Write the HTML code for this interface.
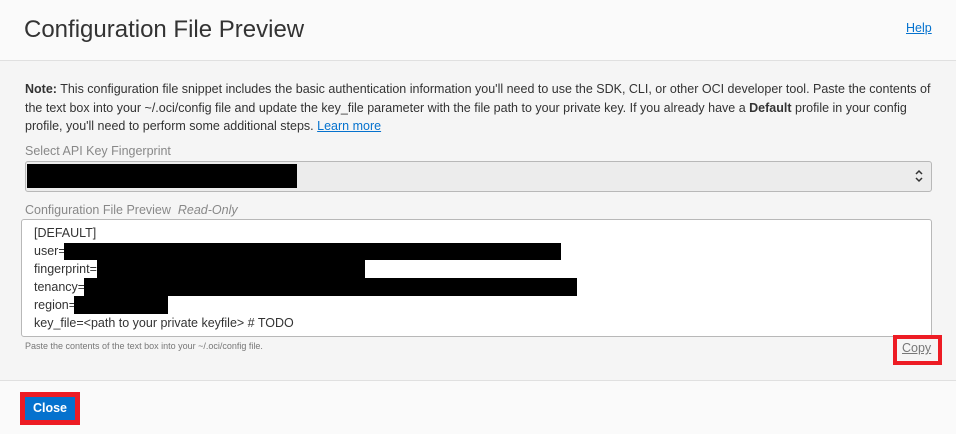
<!DOCTYPE html>
<html><head><style>
*{margin:0;padding:0;box-sizing:border-box}
body{width:956px;height:434px;position:relative;background:#f5f5f5;font-family:"Liberation Sans",Arial,sans-serif;overflow:hidden;color:#333}
.a{position:absolute}
.blk{position:absolute;background:#000}
</style></head><body>
<div class="a" style="left:0;top:0;width:956px;height:61px;background:#fafafa;border-bottom:1px solid #e0e0e0"></div>
<div class="a" style="left:24px;top:16px;font-size:24px;color:#333">Configuration File Preview</div>
<div class="a" style="left:906px;top:21px;font-size:12.5px;color:#0572ce;text-decoration:underline">Help</div>
<div class="a" style="left:25px;top:80px;width:915px;font-size:12.5px;line-height:18.5px;color:#333">
<b>Note:</b> This configuration file snippet includes the basic authentication information you'll need to use the SDK, CLI, or other OCI developer tool. Paste the contents of the text box into your ~/.oci/config file and update the key_file parameter with the file path to your private key. If you already have a <b>Default</b> profile in your config profile, you'll need to perform some additional steps. <span style="color:#0572ce;text-decoration:underline">Learn more</span></div>
<div class="a" style="left:25px;top:144px;font-size:12.5px;color:#888">Select API Key Fingerprint</div>
<div class="a" style="left:25px;top:161px;width:907px;height:31px;background:#ececec;border:1px solid #b8b8b8;border-radius:3px"></div>
<div class="blk" style="left:27px;top:164px;width:270px;height:24px"></div>
<svg class="a" style="left:914px;top:168px" width="10" height="16" viewBox="0 0 10 16"><path d="M2 6 L5 3 L8 6 M2 10 L5 13 L8 10" fill="none" stroke="#333" stroke-width="1.5"/></svg>
<div class="a" style="left:25px;top:203px;font-size:12.5px;color:#888">Configuration File Preview &nbsp;<i>Read-Only</i></div>
<div class="a" style="left:21px;top:219px;width:911px;height:118px;background:#fff;border:1px solid #b8b8b8;border-radius:3px"></div>
<div class="a" style="left:34px;top:224px;font-size:12.5px;line-height:18px;color:#333">[DEFAULT]<br>user=<br>fingerprint=<br>tenancy=<br>region=<br>key_file=&lt;path to your private keyfile&gt; # TODO</div>
<div class="blk" style="left:64px;top:243px;width:497px;height:17px"></div>
<div class="blk" style="left:97px;top:260px;width:268px;height:18px"></div>
<div class="blk" style="left:84px;top:278px;width:493px;height:18px"></div>
<div class="blk" style="left:74px;top:296px;width:94px;height:18px"></div>
<div class="a" style="left:25px;top:341px;font-size:9px;color:#777">Paste the contents of the text box into your ~/.oci/config file.</div>
<div class="a" style="left:893px;top:335px;width:49px;height:30px;border:4px solid #ed1c24;background:#f5f5f5"></div>
<div class="a" style="left:902px;top:341px;font-size:12.5px;color:#777;text-decoration:underline">Copy</div>
<div class="a" style="left:0;top:380px;width:956px;height:54px;background:#fafafa;border-top:1px solid #e0e0e0"></div>
<div class="a" style="left:20px;top:392px;width:60px;height:33px;border:5px solid #ed1c24;background:#0572ce"></div>
<div class="a" style="left:20px;top:401px;width:60px;text-align:center;font-size:12.5px;font-weight:bold;color:#fff">Close</div>
</body></html>
